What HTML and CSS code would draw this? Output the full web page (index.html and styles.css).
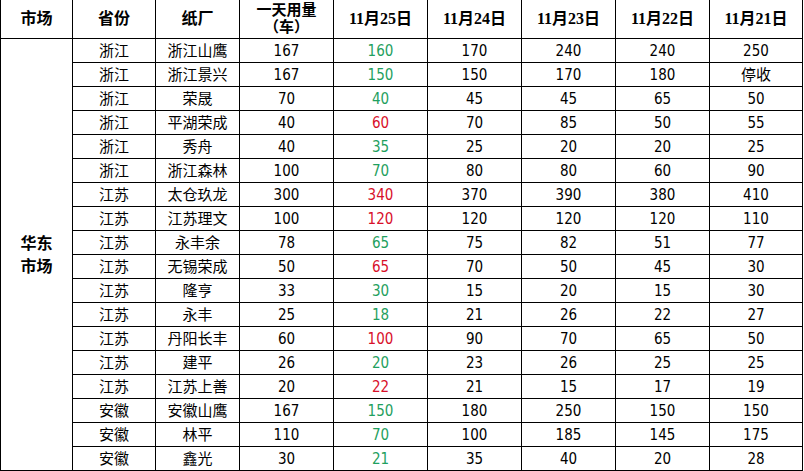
FILE: index.html
```html
<!DOCTYPE html>
<html lang="zh-CN">
<head>
<meta charset="utf-8">
<title>华东市场纸厂用量</title>
<link rel="stylesheet" href="styles.css">
</head>
<body>
<table class="grid">
  <colgroup>
    <col class="c-market"><col class="c-prov"><col class="c-mill"><col class="c-use">
    <col class="c-day"><col class="c-day"><col class="c-day"><col class="c-day"><col class="c-last">
  </colgroup>
  <thead>
    <tr class="head">
      <th>市场</th><th>省份</th><th>纸厂</th><th class="two">一天用量<br>（车）</th>
      <th>11月25日</th><th>11月24日</th><th>11月23日</th><th>11月22日</th><th>11月21日</th>
    </tr>
  </thead>
  <tbody>
    <tr><td class="market" rowspan="18">华东<br>市场</td><td>浙江</td><td>浙江山鹰</td><td class="n">167</td><td class="n down">160</td><td class="n">170</td><td class="n">240</td><td class="n">240</td><td class="n">250</td></tr>
    <tr><td>浙江</td><td>浙江景兴</td><td class="n">167</td><td class="n down">150</td><td class="n">150</td><td class="n">170</td><td class="n">180</td><td>停收</td></tr>
    <tr><td>浙江</td><td>荣晟</td><td class="n">70</td><td class="n down">40</td><td class="n">45</td><td class="n">45</td><td class="n">65</td><td class="n">50</td></tr>
    <tr><td>浙江</td><td>平湖荣成</td><td class="n">40</td><td class="n up">60</td><td class="n">70</td><td class="n">85</td><td class="n">50</td><td class="n">55</td></tr>
    <tr><td>浙江</td><td>秀舟</td><td class="n">40</td><td class="n down">35</td><td class="n">25</td><td class="n">20</td><td class="n">20</td><td class="n">25</td></tr>
    <tr><td>浙江</td><td>浙江森林</td><td class="n">100</td><td class="n down">70</td><td class="n">80</td><td class="n">80</td><td class="n">60</td><td class="n">90</td></tr>
    <tr><td>江苏</td><td>太仓玖龙</td><td class="n">300</td><td class="n up">340</td><td class="n">370</td><td class="n">390</td><td class="n">380</td><td class="n">410</td></tr>
    <tr><td>江苏</td><td>江苏理文</td><td class="n">100</td><td class="n up">120</td><td class="n">120</td><td class="n">120</td><td class="n">120</td><td class="n">110</td></tr>
    <tr><td>江苏</td><td>永丰余</td><td class="n">78</td><td class="n down">65</td><td class="n">75</td><td class="n">82</td><td class="n">51</td><td class="n">77</td></tr>
    <tr><td>江苏</td><td>无锡荣成</td><td class="n">50</td><td class="n up">65</td><td class="n">70</td><td class="n">50</td><td class="n">45</td><td class="n">30</td></tr>
    <tr><td>江苏</td><td>隆亨</td><td class="n">33</td><td class="n down">30</td><td class="n">15</td><td class="n">20</td><td class="n">15</td><td class="n">30</td></tr>
    <tr><td>江苏</td><td>永丰</td><td class="n">25</td><td class="n down">18</td><td class="n">21</td><td class="n">26</td><td class="n">22</td><td class="n">27</td></tr>
    <tr><td>江苏</td><td>丹阳长丰</td><td class="n">60</td><td class="n up">100</td><td class="n">90</td><td class="n">70</td><td class="n">65</td><td class="n">50</td></tr>
    <tr><td>江苏</td><td>建平</td><td class="n">26</td><td class="n down">20</td><td class="n">23</td><td class="n">26</td><td class="n">25</td><td class="n">25</td></tr>
    <tr><td>江苏</td><td>江苏上善</td><td class="n">20</td><td class="n up">22</td><td class="n">21</td><td class="n">15</td><td class="n">17</td><td class="n">19</td></tr>
    <tr><td>安徽</td><td>安徽山鹰</td><td class="n">167</td><td class="n down">150</td><td class="n">180</td><td class="n">250</td><td class="n">150</td><td class="n">150</td></tr>
    <tr><td>安徽</td><td>林平</td><td class="n">110</td><td class="n down">70</td><td class="n">100</td><td class="n">185</td><td class="n">145</td><td class="n">175</td></tr>
    <tr><td>安徽</td><td>鑫光</td><td class="n">30</td><td class="n down">21</td><td class="n">35</td><td class="n">40</td><td class="n">20</td><td class="n">28</td></tr>
  </tbody>
</table>
</body>
</html>
```

FILE: styles.css
```css
html, body {
  margin: 0;
  padding: 0;
  background: #ffffff;
}

.grid {
  border-collapse: collapse;
  table-layout: fixed;
  width: 803px;
  font-family: "Noto Sans CJK SC", sans-serif;
  font-size: 15px;
  color: #000000;
}

.c-market { width: 72px; }
.c-prov { width: 83px; }
.c-mill { width: 84px; }
.c-use { width: 94px; }
.c-day { width: 94px; }
.c-last { width: 93px; }

.grid th,
.grid td {
  border: 1px solid #000000;
  padding: 0;
  text-align: center;
  vertical-align: middle;
  overflow: hidden;
  white-space: nowrap;
}

.grid thead th {
  border-top: none;
}

.head {
  height: 38px;
}

.head th {
  font-weight: bold;
  font-size: 16px;
  line-height: 18px;
  font-family: "Liberation Serif", "Noto Sans CJK SC", serif;
}

.head th.two {
  font-size: 15px;
  line-height: 17px;
}

.grid tbody tr {
  height: 24px;
}

.grid tbody td {
  line-height: 18px;
}

.grid td.market {
  font-weight: bold;
  font-size: 16px;
  line-height: 23px;
}

.grid td.n {
  font-family: "Liberation Sans Narrow", "DejaVu Sans Condensed", "Liberation Sans", sans-serif;
  font-size: 15px;
  padding-top: 2px;
}

.grid td.up { color: #d8102a; }
.grid td.down { color: #1fa060; }
```
